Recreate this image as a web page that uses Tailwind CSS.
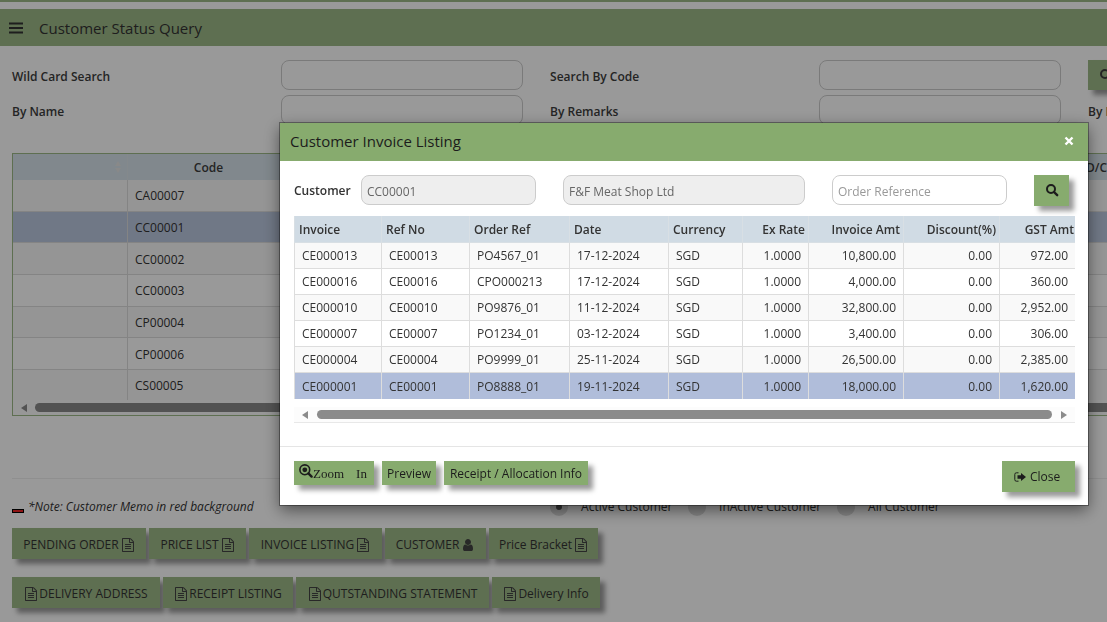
<!DOCTYPE html>
<html lang="en">
<head>
    <meta charset="UTF-8">
    <meta name="viewport" content="width=device-width, initial-scale=1.0">
    <title>Customer Status Query</title>
    <script src="https://cdn.jsdelivr.net/npm/@tailwindcss/browser@4"></script>
</head>
<body class="h-screen overflow-hidden bg-white fill-current font-['Open_Sans',sans-serif] text-xs text-[#333]">
    <!-- icon sprite -->
    <svg class="hidden">
        <symbol id="i-file" viewBox="0 0 1792 1792"><path d="M1596 380q28 28 48 76t20 88v1152q0 40-28 68t-68 28h-1344q-40 0-68-28t-28-68v-1600q0-40 28-68t68-28h896q40 0 88 20t76 48zm-444-244v376h376q-10-29-22-41l-313-313q-12-12-41-22zm384 1528v-1024h-416q-40 0-68-28t-28-68v-416h-768v1536h1280zm-1024-864q0-14 9-23t23-9h704q14 0 23 9t9 23v64q0 14-9 23t-23 9h-704q-14 0-23-9t-9-23v-64zm736 224q14 0 23 9t9 23v64q0 14-9 23t-23 9h-704q-14 0-23-9t-9-23v-64q0-14 9-23t23-9h704zm0 256q14 0 23 9t9 23v64q0 14-9 23t-23 9h-704q-14 0-23-9t-9-23v-64q0-14 9-23t23-9h704z"/></symbol>
        <symbol id="i-user" viewBox="0 0 1792 1792"><path d="M1536 1399q0 109-62.5 187t-150.5 78h-854q-88 0-150.5-78t-62.5-187q0-85 8.5-160.5t31.5-152 58.5-131 94-89 134.5-34.5q131 128 313 128t313-128q76 0 134.5 34.5t94 89 58.5 131 31.5 152 8.5 160.5zm-256-887q0 159-112.5 271.5t-271.5 112.5-271.5-112.5-112.5-271.5 112.5-271.5 271.5-112.5 271.5 112.5 112.5 271.5z"/></symbol>
        <symbol id="i-search" viewBox="0 0 14 14"><circle cx="6" cy="6" r="4" fill="none" stroke="currentColor" stroke-width="2"/><path d="M9 9l3.2 3.2" stroke="currentColor" stroke-width="2.4" stroke-linecap="round"/></symbol>
        <symbol id="i-zoom" viewBox="0 0 14 14"><circle cx="5.8" cy="5.8" r="4.9" fill="none" stroke="currentColor" stroke-width="1.6"/><circle cx="5.8" cy="5.8" r="2.4"/><path d="M9.4 9.4l3.2 3.2" stroke="currentColor" stroke-width="2.4" stroke-linecap="round"/></symbol>
        <symbol id="i-exit" viewBox="0 0 12 10"><path d="M4.500.8H2.400Q.8.8.8 2.400v5.200Q.8 9.200 2.400 9.200H4.500" fill="none" stroke="currentColor" stroke-width="1"/><path d="M3.500 3.200H7V1l5 4-5 4V6.800H3.500z"/></symbol>
    </svg>

    <div class="h-[2px] bg-[#9db987]"></div>
    <header class="mt-[7px] flex h-[37px] items-center gap-4 bg-[#9db987] pl-[9px]">
        <button type="button" aria-label="Menu">
            <svg class="h-3 w-[14px]" viewBox="0 0 14 12"><path d="M0 1.500h14M0 6h14M0 10.500h14" stroke="#333" stroke-width="2"/></svg>
        </button>
        <h1 class="text-[15px]">Customer Status Query</h1>
    </header>

    <!-- page is wider than the window, the rest is cut off at the right -->
    <main class="w-[146.9%] fill-[#444] pl-3">
        <div class="mt-[14px] grid grid-cols-6 gap-y-[5px] font-semibold text-[#3c3c3c]">
            <label for="wild" class="pt-[9px]">Wild Card Search</label>
            <div class="pr-[27px]"><input id="wild" type="text" class="h-[30px] w-full rounded-[8px] border border-[#ccc]"></div>
            <label for="code" class="pt-[9px]">Search By Code</label>
            <div class="pr-[27px]"><input id="code" type="text" class="h-[30px] w-full rounded-[8px] border border-[#ccc]"></div>
            <div class="col-span-2">
                <button type="button" aria-label="Search" class="flex h-[30px] w-[35px] items-center justify-center bg-[#9db987] shadow-[5px_5px_5px_rgba(0,0,0,0.4)]"><svg class="size-[14px]"><use href="#i-search"/></svg></button>
            </div>
            <label for="name" class="pt-[9px]">By Name</label>
            <div class="pr-[27px]"><input id="name" type="text" class="h-[30px] w-full rounded-[8px] border border-[#ccc]"></div>
            <label for="remarks" class="pt-[9px]">By Remarks</label>
            <div class="pr-[27px]"><input id="remarks" type="text" class="h-[30px] w-full rounded-[8px] border border-[#ccc]"></div>
            <span class="pt-[9px]">By Date</span>
        </div>

        <div class="mt-7 h-[263px] border border-[#9db987]">
            <table class="h-[246px] w-full table-fixed border-separate border-spacing-0">
                <colgroup><col class="w-[115px]"><col class="w-[161px]"><col class="w-[797px]"><col></colgroup>
                <thead>
                    <tr class="h-[26px] bg-[#d7e3eb] text-[#3c3c3c]">
                        <th class="border-r border-[#dde5ea] pr-[5px]"><svg class="ml-auto h-3 w-2" viewBox="0 0 8 12" fill="#e4e4e4"><path d="M4 0l3 5H1zM4 12L1 7h6z"/></svg></th>
                        <th class="pt-[2px] font-semibold">Code</th>
                        <th></th>
                        <th class="pt-[2px] text-left font-semibold">D/C</th>
                    </tr>
                </thead>
                <tbody id="customers"></tbody>
            </table>
            <div class="flex h-[15px] items-center gap-2 bg-[#fcfcfc] pl-2">
                <svg class="h-2 w-[6px]" viewBox="0 0 6 8" fill="#8b8b8b"><path d="M6 0v8L0 4z"/></svg>
                <div class="h-[9px] grow rounded-full bg-[#8b8b8b]"></div>
            </div>
        </div>

        <div class="mt-[62px] border-t border-[#eee]"></div>

        <div class="mt-[19px] grid h-[18px] grid-cols-6 items-center">
            <div class="col-span-2 flex items-center gap-1 italic">
                <span class="mt-2 h-1 w-3 border border-black bg-[#e22]"></span>
                *Note: Customer Memo in red background
            </div>
            <div class="col-span-4 flex items-center">
                <label class="flex w-[138px] items-center gap-[13px]"><input type="radio" name="status" checked class="size-[18px] appearance-none rounded-full border-[6px] border-[#ddd] bg-[#555]">Active Customer</label>
                <label class="flex w-[149px] items-center gap-[13px]"><input type="radio" name="status" class="size-[18px] appearance-none rounded-full bg-[#ddd]">InActive Customer</label>
                <label class="flex items-center gap-[13px]"><input type="radio" name="status" class="size-[18px] appearance-none rounded-full bg-[#ddd]">All Customer</label>
            </div>
        </div>

        <div class="mt-[12px] flex gap-[3px] *:flex *:h-[31px] *:items-center *:justify-center *:gap-[2px] *:bg-[#9db987] *:pt-[2px] *:shadow-[5px_5px_5px_rgba(0,0,0,0.4)]">
            <button type="button" class="w-[134px]">PENDING ORDER<svg class="size-[14px]"><use href="#i-file"/></svg></button>
            <button type="button" class="w-[97px]">PRICE LIST<svg class="size-[14px]"><use href="#i-file"/></svg></button>
            <button type="button" class="w-[133px]">INVOICE LISTING<svg class="size-[14px]"><use href="#i-file"/></svg></button>
            <button type="button" class="w-[101px]">CUSTOMER<svg class="size-[14px]"><use href="#i-user"/></svg></button>
            <button type="button" class="w-[109px]">Price Bracket<svg class="size-[14px]"><use href="#i-file"/></svg></button>
        </div>
        <div class="mt-[18px] flex gap-[3px] *:flex *:h-[31px] *:items-center *:justify-center *:gap-px *:bg-[#9db987] *:pt-[2px] *:shadow-[5px_5px_5px_rgba(0,0,0,0.4)]">
            <button type="button" class="w-[148px]"><svg class="size-[14px]"><use href="#i-file"/></svg>DELIVERY ADDRESS</button>
            <button type="button" class="w-[130px]"><svg class="size-[14px]"><use href="#i-file"/></svg>RECEIPT LISTING</button>
            <button type="button" class="w-[193px]"><svg class="size-[14px]"><use href="#i-file"/></svg>QUTSTANDING STATEMENT</button>
            <button type="button" class="w-[108px]"><svg class="size-[14px]"><use href="#i-file"/></svg>Delivery Info</button>
        </div>
    </main>

    <div class="fixed inset-0 bg-black/40"></div>

    <section role="dialog" aria-labelledby="dlg-title" class="fixed left-[280px] right-[19px] top-[123px] bg-white shadow-[0_0_0_1px_rgba(0,0,0,0.35),0_5px_15px_rgba(0,0,0,0.5)]">
        <div class="flex h-[38px] items-center justify-between bg-[#87ab6e] pb-[2px] pl-[10px] pr-[14px] text-[#1c1c1c]">
            <h2 id="dlg-title" class="text-[15px]">Customer Invoice Listing</h2>
            <button type="button" aria-label="Close"><svg class="size-[10px]" viewBox="0 0 10 10"><path d="M1.500 1.500l7 7M8.500 1.500l-7 7" stroke="#fff" stroke-width="2.400"/></svg></button>
        </div>

        <div class="pl-[14px] pr-[13px] pt-[14px]">
            <div class="flex h-[30px] items-center gap-[27px]">
                <div class="flex items-center">
                    <label for="cust" class="w-[67px] pt-[2px] font-semibold">Customer</label>
                    <input id="cust" type="text" readonly value="CC00001" class="h-[30px] w-[175px] rounded-[8px] border border-[#ccc] bg-[#eee] px-[5px] pt-[2px] text-[#666]">
                </div>
                <input type="text" aria-label="Customer name" readonly value="F&amp;F Meat Shop Ltd" class="h-[30px] grow rounded-[8px] border border-[#ccc] bg-[#eee] px-[5px] pt-[2px] text-[#666]">
                <input type="text" aria-label="Order Reference" placeholder="Order Reference" class="h-[30px] w-[175px] rounded-[8px] border border-[#ccc] px-[5px] pt-[2px] placeholder:text-[#999]">
                <button type="button" aria-label="Search" class="mr-[6px] flex h-[31px] w-[35px] items-center justify-center bg-[#87ab6e] text-[#1c1c1c] shadow-[5px_5px_5px_rgba(0,0,0,0.4)]"><svg class="size-[14px]"><use href="#i-search"/></svg></button>
            </div>

            <table class="mt-[11px] w-full table-fixed border-separate border-spacing-0">
                <colgroup><col class="w-[87px]"><col class="w-[88px]"><col class="w-[100px]"><col class="w-[99px]"><col class="w-[74px]"><col class="w-[66px]"><col class="w-[95px]"><col class="w-[96px]"><col></colgroup>
                <thead>
                    <tr class="h-[27px] bg-[#d0dbe4] text-left *:border-b *:border-l *:border-[#d8dfe4] *:pl-1 *:pr-[3px] *:pt-[2px] *:font-semibold">
                        <th>Invoice</th>
                        <th>Ref No</th>
                        <th>Order Ref</th>
                        <th>Date</th>
                        <th>Currency</th>
                        <th class="text-right">Ex Rate</th>
                        <th class="text-right">Invoice Amt</th>
                        <th class="text-right">Discount(%)</th>
                        <th class="text-right"><span class="-mr-[2px]">GST Amt</span></th>
                    </tr>
                </thead>
                <tbody id="invoices"></tbody>
            </table>

            <div class="mt-2 flex h-4 items-center gap-[9px] border-b border-[#e8e8e8] bg-[#fcfcfc] px-[8px]">
                <svg class="h-2 w-[6px]" viewBox="0 0 6 8" fill="#8b8b8b"><path d="M6 0v8L0 4z"/></svg>
                <div class="h-[9px] grow rounded-full bg-[#8b8b8b]"></div>
                <svg class="h-2 w-[6px]" viewBox="0 0 6 8" fill="#8b8b8b"><path d="M0 0v8l6-4z"/></svg>
            </div>
        </div>

        <div class="mt-[23px] flex items-start gap-2 border-t border-[#e5e5e5] pb-[13px] pl-[14px] pr-[13px] pt-[14px] text-[#1c1c1c] *:bg-[#87ab6e] *:shadow-[5px_5px_5px_rgba(0,0,0,0.4)]">
            <button type="button" class="flex h-6 w-20 items-center pl-[5px] font-['Liberation_Serif',serif]"><svg class="mb-1 size-[14px]"><use href="#i-zoom"/></svg><span class="flex gap-3 pt-[2px] text-[13px]"><span>Zoom</span><span>In</span></span></button>
            <button type="button" class="h-6 w-[54px] pt-px">Preview</button>
            <button type="button" class="h-6 w-36 pt-px">Receipt / Allocation Info</button>
            <button type="button" class="ml-auto flex h-[31px] w-[73px] items-center gap-1 pl-3"><svg class="h-[10px] w-3"><use href="#i-exit"/></svg>Close</button>
        </div>
    </section>

    <script>
        const customers = ["CA00007", "CC00001", "CC00002", "CC00003", "CP00004", "CP00006", "CS00005"];
        document.getElementById("customers").innerHTML = customers.map((code) => {
            const bg = code === "CC00001" ? "bg-[#bbc8df]" : "odd:bg-[#f9f9f9]";
            return `<tr class="${bg} *:border-b *:border-[#ddd] *:pt-[2px] last:*:border-b-0"><td class="border-r"></td><td class="pl-[7px]">${code}</td><td></td><td></td></tr>`;
        }).join("");

        const invoices = [
            ["CE000013", "CE00013", "PO4567_01", "17-12-2024", "SGD", "1.0000", "10,800.00", "0.00", "972.00"],
            ["CE000016", "CE00016", "CPO000213", "17-12-2024", "SGD", "1.0000", "4,000.00", "0.00", "360.00"],
            ["CE000010", "CE00010", "PO9876_01", "11-12-2024", "SGD", "1.0000", "32,800.00", "0.00", "2,952.00"],
            ["CE000007", "CE00007", "PO1234_01", "03-12-2024", "SGD", "1.0000", "3,400.00", "0.00", "306.00"],
            ["CE000004", "CE00004", "PO9999_01", "25-11-2024", "SGD", "1.0000", "26,500.00", "0.00", "2,385.00"],
            ["CE000001", "CE00001", "PO8888_01", "19-11-2024", "SGD", "1.0000", "18,000.00", "0.00", "1,620.00"],
        ];
        document.getElementById("invoices").innerHTML = invoices.map((row, i) => {
            const bg = i === 5 ? "bg-[#b0bdda]" : "odd:bg-[#f9f9f9]";
            const cells = row.map((v, c) => `<td class="${c > 4 ? "text-right" : ""}">${v}</td>`).join("");
            return `<tr class="h-[26px] ${bg} *:border-b *:border-l *:border-[#ddd] *:px-[7px] *:pt-px last:*:border-b-0">${cells}</tr>`;
        }).join("");
    </script>
</body>
</html>
